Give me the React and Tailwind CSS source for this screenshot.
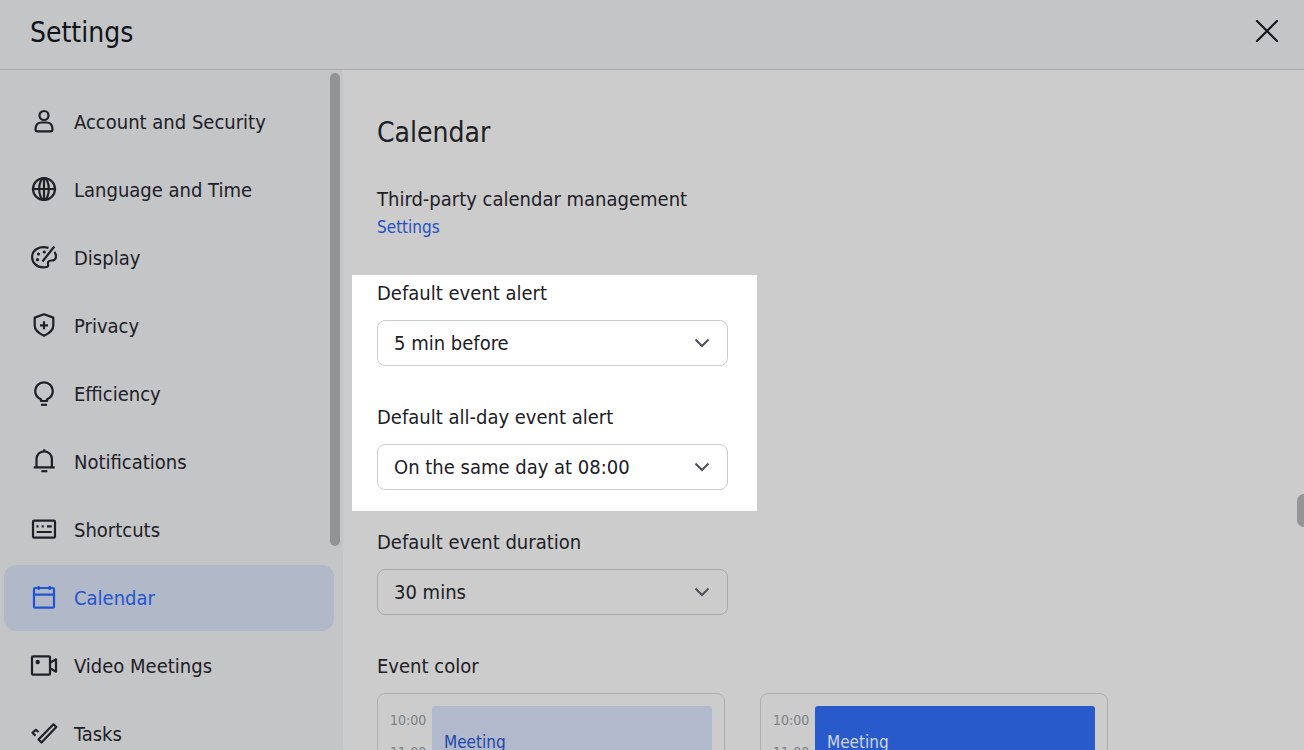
import React, { useState } from 'react';

const icons = {
  account: (
    <>
      <circle cx="14" cy="7.5" r="4.5" />
      <path d="M5.5 21.5c0-4.400 2.300-7 6-7h5c3.700 0 6 2.600 6 7 0 1.200-.6 1.800-1.700 1.800H7.200c-1.100 0-1.700-.6-1.700-1.800z" />
    </>
  ),
  language: (
    <>
      <circle cx="14" cy="13" r="11" />
      <ellipse cx="14" cy="13" rx="4.800" ry="11" />
      <path d="M3 13h22M14 2v22" />
    </>
  ),
  display: (
    <>
      <path d="M18.500 3.900C10 1.500 2.100 5.500 2.100 13c0 6 4.900 10.300 11 10.300 1.900 0 3.200-.2 4.200-.6.900-.4 1-1 .8-2-.6-2.800.4-4.200 3-4.200 2.800.1 4.900-1.400 4.900-4 0-1.800-.6-3.300-1.600-4.600" />
      <path d="M24.300 2.500 12.500 17.500" />
      <g fill="currentColor" stroke="none">
        <circle cx="8.500" cy="10" r="1.600" />
        <circle cx="14.300" cy="8" r="1.600" />
        <circle cx="7.500" cy="15.700" r="1.600" />
      </g>
    </>
  ),
  privacy: (
    <>
      <path d="M14 2.300 23.300 5.600v8c0 4.300-3.700 7.700-9.300 10.200-5.600-2.500-9.300-5.900-9.300-10.200v-8z" />
      <path d="M14 9.300v8M10 13.300h8" />
    </>
  ),
  efficiency: (
    <>
      <path d="M11 21v-1.700C7.500 17.900 5.200 15 5.200 11.100a8.800 8.800 0 0 1 17.600 0c0 3.900-2.300 6.800-5.800 8.200V21z" />
      <path d="M11 24.800h6" />
    </>
  ),
  notifications: (
    <>
      <path d="M6.500 19v-8a7.700 7.700 0 0 1 15.400 0v8M3.700 19.300h21M14.200 1.300v2" />
      <path d="M11.300 23.200h6" />
    </>
  ),
  shortcuts: (
    <>
      <rect x="3" y="4.700" width="22" height="17" rx="1.200" />
      <path d="M6.500 10.300h2M11.700 10.300h2M17 10.300h4.700M6.700 16h15" />
    </>
  ),
  calendar: (
    <>
      <rect x="4" y="4" width="20" height="19.700" rx="1" />
      <path d="M4 10.700h20M8.700 2v4M19.700 2v4" />
    </>
  ),
  video: (
    <>
      <rect x="2" y="4.300" width="18" height="18.400" rx="1" />
      <circle cx="7.700" cy="10" r="2.200" fill="currentColor" stroke="none" />
      <path d="M20.500 10.500 26 7.300v12.400l-5.500-3.200" />
    </>
  ),
  tasks: (
    <>
      <path d="M23.500 4.300 26.300 7 11.500 22.500 8.500 19.500z" />
      <path d="M5.500 15.700 2.500 12.800 5.800 9.800 8.500 12" />
    </>
  ),
};

const menu = [
  { id: 'account', label: 'Account and Security' },
  { id: 'language', label: 'Language and Time' },
  { id: 'display', label: 'Display' },
  { id: 'privacy', label: 'Privacy' },
  { id: 'efficiency', label: 'Efficiency' },
  { id: 'notifications', label: 'Notifications' },
  { id: 'shortcuts', label: 'Shortcuts' },
  { id: 'calendar', label: 'Calendar' },
  { id: 'video', label: 'Video Meetings' },
  { id: 'tasks', label: 'Tasks' },
];

function MenuIcon({ name }) {
  return (
    <svg className="size-7 shrink-0" viewBox="0 0 28 28" fill="none" stroke="currentColor" strokeWidth="2.200" strokeLinejoin="round" aria-hidden="true">
      {icons[name]}
    </svg>
  );
}

function SelectField({ id, label, options, muted }) {
  const [value, setValue] = useState(options[0]);

  return (
    <div className="flex flex-col gap-[13px]">
      <label htmlFor={id} className="text-[20px] leading-7">{label}</label>
      <div className="relative w-[351px]">
        <select
          id={id}
          value={value}
          onChange={(e) => setValue(e.target.value)}
          className={`block h-[46px] w-full appearance-none rounded-lg border bg-transparent pl-4 pr-12 text-[20px] ${
            muted ? 'border-[#a6a8ab]' : 'border-[#c9cdd2]'
          }`}
        >
          {options.map((option) => (
            <option key={option}>{option}</option>
          ))}
        </select>
        <svg className="pointer-events-none absolute right-[18px] top-[15px] size-4" viewBox="0 0 16 16" fill="none" stroke="#4d5158" strokeWidth="2" aria-hidden="true">
          <path d="M1.500 4.500 8 11l6.500-6.500" />
        </svg>
      </div>
    </div>
  );
}

function ColorCard({ eventClass }) {
  return (
    <button type="button" className="flex h-[150px] w-[348px] gap-[5px] rounded-lg border border-[#adafb1] p-3 text-left">
      <span className="flex w-[37px] flex-col gap-2 pt-[2px] text-[14px] leading-6 text-[#7b7f85]">
        <span>10:00</span>
        <span>11:00</span>
      </span>
      <span className={`flex-1 self-stretch rounded-[3px] px-3 pt-6 text-[17px] leading-6 ${eventClass}`}>Meeting</span>
    </button>
  );
}

export default function App() {
  const [active, setActive] = useState('calendar');

  return (
    <div className="flex h-screen flex-col overflow-hidden bg-[#cccccc] font-['DejaVu_Sans_Condensed','Noto_Sans',sans-serif] text-[#1d2026]">
      <header className="flex h-[70px] shrink-0 items-center justify-between border-b border-[#a9aaac] bg-[#c4c5c7] pl-[30px] pr-6">
        <h1 className="pb-[3px] text-[28px] leading-9 text-[#101318]">Settings</h1>
        <button type="button" aria-label="Close" className="pb-2">
          <svg className="size-[26px]" viewBox="0 0 26 26" fill="none" stroke="#14171d" strokeWidth="2.200" strokeLinecap="round">
            <path d="m3 3 20 20M23 3 3 23" />
          </svg>
        </button>
      </header>

      <div className="flex min-h-0 flex-1">
        <nav className="relative w-[343px] shrink-0 overflow-hidden bg-[#c4c5c7] pl-1 pr-[9px] pt-[19px]">
          <ul className="flex flex-col gap-[2px]">
            {menu.map((item) => (
              <li key={item.id}>
                <button
                  type="button"
                  onClick={() => setActive(item.id)}
                  className={`flex h-[66px] w-full items-center gap-4 rounded-xl pl-[26px] text-[20px] ${
                    active === item.id ? 'bg-[#b1b8c7] text-[#1f55d2]' : ''
                  }`}
                >
                  <MenuIcon name={item.id} />
                  {item.label}
                </button>
              </li>
            ))}
          </ul>
          <div className="absolute right-[3px] top-[3px] h-[473px] w-[10px] rounded-full bg-[#929395]" />
        </nav>

        <main className="relative min-w-0 flex-1 overflow-hidden pl-[34px] pt-[45px]">
          <h2 className="text-[28px] leading-9">Calendar</h2>

          <div className="mt-[34px] flex flex-col items-start">
            <p className="text-[20px] leading-7">Third-party calendar management</p>
            <a href="#settings" className="text-[17px] leading-7 text-[#1f51c4]">Settings</a>
          </div>

          <section className="-ml-[25px] mt-[34px] flex w-[405px] flex-col gap-[37px] bg-white pb-[21px] pl-[25px] pt-1">
            <SelectField id="event-alert" label="Default event alert" options={['5 min before', '15 min before', '30 min before']} />
            <SelectField id="all-day-alert" label="Default all-day event alert" options={['On the same day at 08:00', 'On the same day at 09:00']} />
          </section>

          <section className="mt-[17px] flex flex-col gap-[37px]">
            <SelectField id="event-duration" label="Default event duration" options={['30 mins', '45 mins', '60 mins']} muted />
            <div className="flex flex-col gap-[13px]">
              <h3 className="text-[20px] leading-7">Event color</h3>
              <div className="flex gap-[35px]">
                <ColorCard eventClass="bg-[#b3b9cd] text-[#1c48a8]" />
                <ColorCard eventClass="bg-[#285acc] text-[#d0d5e0]" />
              </div>
            </div>
          </section>

          <div className="absolute right-0 top-[424px] h-[33px] w-[7px] rounded-l-full bg-[#939496]" />
        </main>
      </div>
    </div>
  );
}
